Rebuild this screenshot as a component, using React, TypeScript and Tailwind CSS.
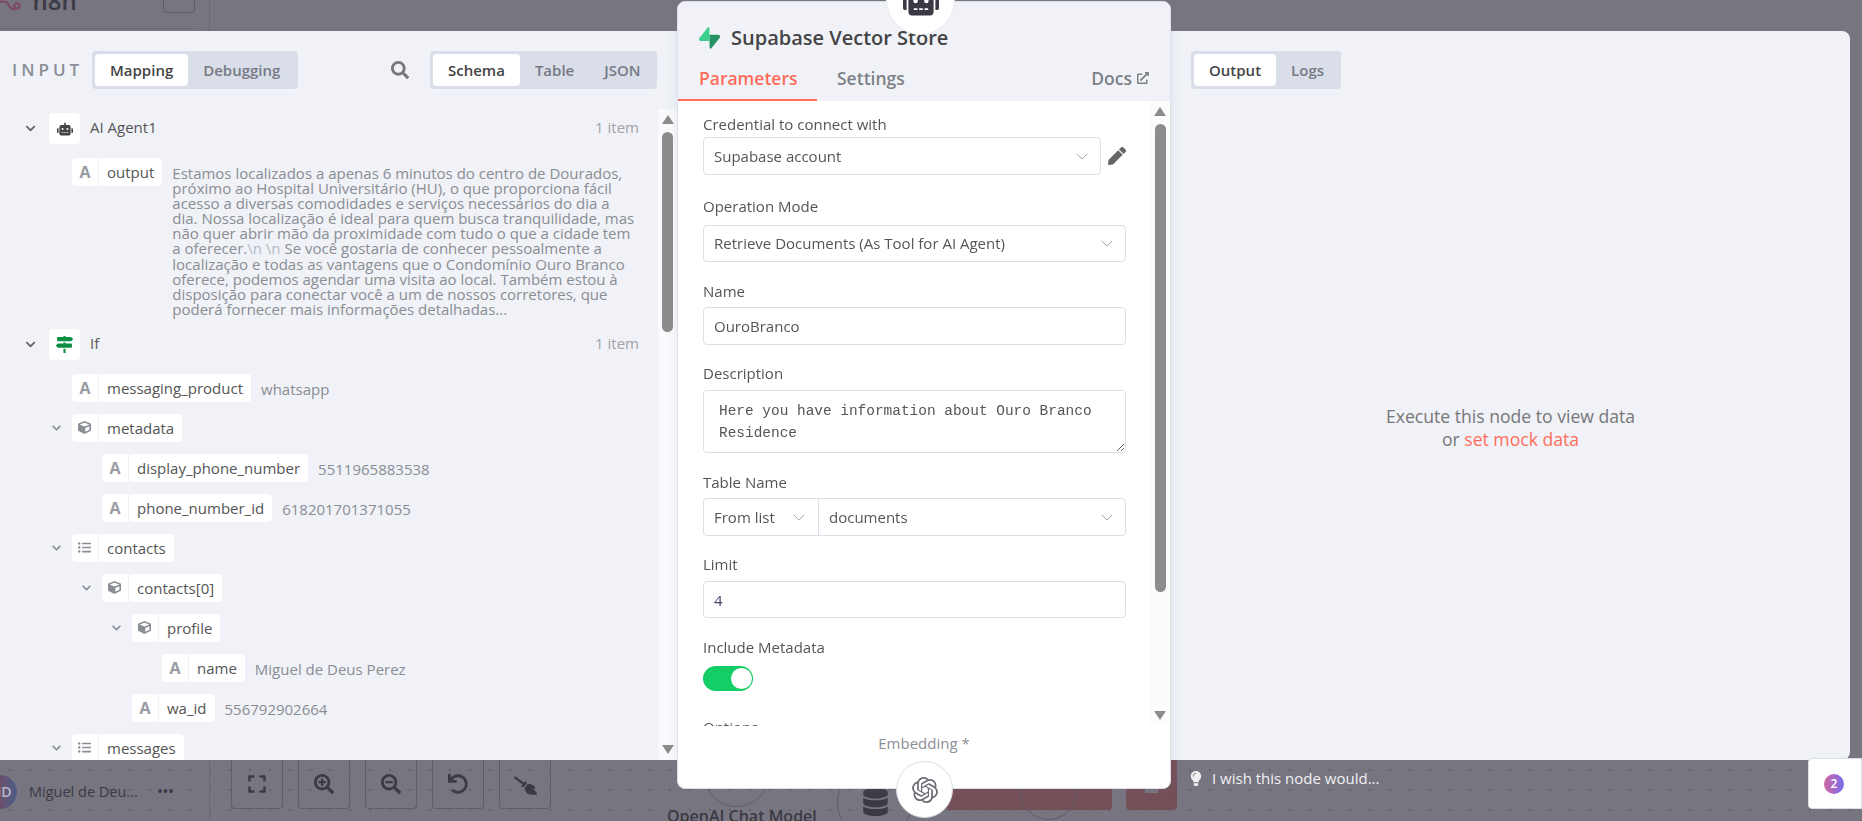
import type { ReactNode } from "react";
import {
  FaBroom,
  FaChevronDown,
  FaCube,
  FaDatabase,
  FaExpand,
  FaExternalLinkAlt,
  FaLightbulb,
  FaListUl,
  FaMapSigns,
  FaPen,
  FaRobot,
  FaSearch,
  FaSearchMinus,
  FaSearchPlus,
  FaUndo,
} from "react-icons/fa";
import { SiOpenai } from "react-icons/si";

type Kind = "text" | "object" | "list";

const rows: { depth: number; kind: Kind; name: string; value?: string }[] = [
  { depth: 0, kind: "text", name: "messaging_product", value: "whatsapp" },
  { depth: 0, kind: "object", name: "metadata" },
  { depth: 1, kind: "text", name: "display_phone_number", value: "5511965883538" },
  { depth: 1, kind: "text", name: "phone_number_id", value: "618201701371055" },
  { depth: 0, kind: "list", name: "contacts" },
  { depth: 1, kind: "object", name: "contacts[0]" },
  { depth: 2, kind: "object", name: "profile" },
  { depth: 3, kind: "text", name: "name", value: "Miguel de Deus Perez" },
  { depth: 2, kind: "text", name: "wa_id", value: "556792902664" },
  { depth: 0, kind: "list", name: "messages" },
];

function Pill({ kind, name }: { kind: Kind; name: string }) {
  return (
    <div className="flex h-[28px] shrink-0 items-center rounded bg-white text-[15px] text-[#555]">
      <span className="flex h-full w-[27px] items-center justify-center border-r border-[#eef0f5] text-[16px] font-bold text-[#989ba3]">
        {kind === "text" && "A"}
      </span>
      {kind === "object" && <FaCube className="-ml-[21px] mr-[8px] h-[13px] w-[13px] text-[#8b8e96]" />}
      {kind === "list" && <FaListUl className="-ml-[21px] mr-[8px] h-[13px] w-[13px] text-[#8b8e96]" />}
      <span className="pl-[8px] pr-[8px]">{name}</span>
    </div>
  );
}

function TreeRow({ depth, kind, name, value }: { depth: number; kind: Kind; name: string; value?: string }) {
  return (
    <div className="flex h-[40px] items-center" style={{ paddingLeft: 72 + depth * 30 }}>
      {kind !== "text" && (
        <span className="-ml-[21px] flex w-[21px] items-center">
          <FaChevronDown className="h-[10px] w-[11px] text-[#8b8e96]" />
        </span>
      )}
      <Pill kind={kind} name={name} />
      {value && <span className="ml-[10px] mt-[3px] text-[15px] text-[#8a8d93]">{value}</span>}
    </div>
  );
}

function NodeHeader({ icon, name }: { icon: ReactNode; name: string }) {
  return (
    <div className="flex h-[31px] items-center pl-[24px] pr-[19px]">
      <FaChevronDown className="h-[11px] w-[13px] text-[#666]" />
      <span className="ml-[12px] flex h-[31px] w-[31px] items-center justify-center rounded bg-white">{icon}</span>
      <span className="ml-[10px] -mt-[2px] text-[15px] text-[#555]">{name}</span>
      <span className="ml-auto -mt-[2px] text-[15px] text-[#a0a2a8]">1 item</span>
    </div>
  );
}

function Segmented({ items, active, className }: { items: string[]; active: string; className: string }) {
  return (
    <div className={`flex h-[38px] items-center rounded bg-[#d9dee8] px-[3px] text-[15px] font-semibold ${className}`}>
      {items.map((item) =>
        item === active ? (
          <span key={item} className="flex h-[32px] items-center rounded bg-white px-[15px] text-[#444]">
            {item}
          </span>
        ) : (
          <span key={item} className="px-[15px] text-[#767a85]">
            {item}
          </span>
        ),
      )}
    </div>
  );
}

function Scrollbar({ thumb, className }: { thumb: string; className: string }) {
  return (
    <div className={`flex shrink-0 flex-col items-center ${className}`}>
      <span className="h-0 w-0 border-x-[6px] border-b-[9px] border-x-transparent border-b-[#8c8c8c]" />
      <span className={`mt-[8px] w-[11px] rounded-full bg-[#8c8c8c] ${thumb}`} />
      <span className="mt-auto h-0 w-0 border-x-[6px] border-t-[9px] border-x-transparent border-t-[#8c8c8c]" />
    </div>
  );
}

function Chevron() {
  return (
    <svg viewBox="0 0 14 8" className="h-[7px] w-[14px] shrink-0" fill="none" stroke="#8f929c" strokeWidth="1">
      <path d="M1 1l6 6 6-6" />
    </svg>
  );
}

function Label({ children, className }: { children: ReactNode; className: string }) {
  return <div className={`h-[19px] text-[15px] leading-[19px] text-[#555] ${className}`}>{children}</div>;
}

function Select({ value, className }: { value: string; className: string }) {
  return (
    <div className={`flex items-center justify-between rounded border border-[#dbdfe7] bg-white pl-[10px] pr-[11px] text-[15px] text-[#555] ${className}`}>
      {value}
      <Chevron />
    </div>
  );
}

const fieldInput = "block w-[423px] rounded border border-[#dbdfe7] bg-white px-[10px] text-[15px] text-[#555] outline-none";

function ToolButton({ children }: { children: ReactNode }) {
  return (
    <div className="flex h-[49px] w-[52px] items-start justify-center rounded-b border-x border-b border-[#5f5e69] pt-[14px] text-[20px] text-[#3b3a44]">
      {children}
    </div>
  );
}

export default function App() {
  return (
    <div className="relative flex h-[821px] w-[1862px] flex-col overflow-hidden bg-[#777580] font-['Open_Sans',sans-serif]">
      {/* canvas behind the modal */}
      <div className="flex h-[31px] shrink-0">
        <div className="h-[31px] w-[210px] shrink-0 border-r border-[#696873]">
          <div className="flex h-[29px] w-[195px] items-start border-b border-[#6b6a75]">
            <svg viewBox="0 0 24 14" className="h-[14px] w-[24px]" fill="none" stroke="#7e4a68" strokeWidth="2.5">
              <path d="M0 1h6c3 0 3 4 6 7 2 2 5 2 7 0" />
              <circle cx="19" cy="6" r="3" />
            </svg>
            <span className="-mt-[17px] ml-[11px] text-[24px] font-semibold text-[#3b3a44]">n8n</span>
            <span className="ml-[86px] flex h-[13px] w-[36px] items-start justify-center rounded-b border-x border-b border-[#5f5e69] text-[#3b3a44]" />
          </div>
        </div>
      </div>

      <div className="flex h-[729px] w-[1850px] shrink-0 overflow-hidden rounded-r-lg bg-[#f0f2f8]">
        <section className="flex w-[677px] shrink-0 flex-col">
          <header className="flex h-[78px] shrink-0 items-start pl-[12px] pt-[20px]">
            <span className="mt-[7px] w-[80px] text-[17px] font-semibold leading-[24px] tracking-[4px] text-[#8b8e96]">INPUT</span>
            <Segmented items={["Mapping", "Debugging"]} active="Mapping" className="w-[206px]" />
            <FaSearch className="ml-[93px] mt-[10px] h-[18px] w-[18px] text-[#777]" />
            <Segmented items={["Schema", "Table", "JSON"]} active="Schema" className="ml-[21px] w-[227px]" />
          </header>
          <div className="flex min-h-0 flex-1">
            <div className="min-w-0 flex-1 overflow-hidden pt-[4px]">
              <NodeHeader icon={<FaRobot className="h-[16px] w-[16px] text-[#444]" />} name="AI Agent1" />
              <div className="mt-[14px] flex items-start pl-[72px]">
                <Pill kind="text" name="output" />
                <p className="ml-[10px] mt-[8px] whitespace-nowrap text-[15px] leading-[15.1px] text-[#8a8d93]">
                  Estamos localizados a apenas 6 minutos do centro de Dourados,
                  <br />
                  próximo ao Hospital Universitário (HU), o que proporciona fácil
                  <br />
                  acesso a diversas comodidades e serviços necessários do dia a
                  <br />
                  dia. Nossa localização é ideal para quem busca tranquilidade, mas
                  <br />
                  não quer abrir mão da proximidade com tudo o que a cidade tem
                  <br />
                  a oferecer.<span className="text-[#b4bcc6]">\n \n</span> Se você gostaria de conhecer pessoalmente a
                  <br />
                  localização e todas as vantagens que o Condomínio Ouro Branco
                  <br />
                  oferece, podemos agendar uma visita ao local. Também estou à
                  <br />
                  disposição para conectar você a um de nossos corretores, que
                  <br />
                  poderá fornecer mais informações detalhadas...
                </p>
              </div>
              <div className="mt-[12px]">
                <NodeHeader icon={<FaMapSigns className="h-[17px] w-[17px] text-[#0c8f43]" />} name="If" />
              </div>
              <div className="mt-[8px]">
                {rows.map((row) => (
                  <TreeRow key={row.name} {...row} />
                ))}
              </div>
            </div>
            <Scrollbar thumb="h-[200px]" className="w-[19px] bg-[#f9fafc] pb-[6px] pt-[6px]" />
          </div>
        </section>

        <div className="w-[494px] shrink-0" />

        <section className="flex min-w-0 flex-1 flex-col">
          <header className="pl-[20px] pt-[20px]">
            <Segmented items={["Output", "Logs"]} active="Output" className="w-[150px]" />
          </header>
          <div className="flex flex-1 flex-col items-center justify-center pt-[6px] text-[17.6px] leading-[23px] text-[#777]">
            <span>Execute this node to view data</span>
            <span>
              or <span className="text-[#ff6d5a]">set mock data</span>
            </span>
          </div>
        </section>
      </div>

      <div className="relative flex h-[61px] shrink-0 items-start overflow-hidden bg-[#777580] bg-[radial-gradient(#62616c_1px,transparent_1px)] bg-[size:20px_20px]">
        <div className="flex h-[61px] w-[210px] shrink-0 items-center border-r border-[#696873] pt-[2px]">
          <span className="-ml-[17px] flex h-[34px] w-[34px] shrink-0 items-center justify-center rounded-full bg-[linear-gradient(90deg,#8e4050,#4b5f88)] text-[14px] font-semibold text-[#b8b6c4]">
            MD
          </span>
          <span className="ml-[12px] whitespace-nowrap text-[14.5px] font-medium text-[#3b3a44]">Miguel de Deu...</span>
          <span className="ml-[20px] text-[12px] font-bold tracking-[1px] text-[#3b3a44]">•••</span>
        </div>
        <div className="ml-[21px] flex gap-[15px]">
          <ToolButton><FaExpand /></ToolButton>
          <ToolButton><FaSearchPlus /></ToolButton>
          <ToolButton><FaSearchMinus /></ToolButton>
          <ToolButton><FaUndo /></ToolButton>
          <ToolButton><FaBroom className="h-[23px] w-[23px] -scale-x-100" /></ToolButton>
        </div>
        <div className="ml-[639px] mt-[7px] flex items-center gap-[10px] whitespace-nowrap text-[15px] text-[#f0f0f2]">
          <FaLightbulb className="h-[15px] w-[12px]" />
          I wish this node would...
        </div>

        {/* nodes of the workflow, mostly hidden by the modal */}
        <span className="absolute left-[703px] top-[-20px] h-[67px] w-[67px] rounded-full border border-[#5f5e69]" />
        <span className="absolute left-[667px] top-[44px] whitespace-nowrap text-[16px] font-semibold text-[#3b3a44]">OpenAI Chat Model</span>
        <span className="absolute left-[837px] top-[5px] h-[75px] w-[75px] rounded-full border border-[#5f5e69]" />
        <FaDatabase className="absolute left-[862px] top-[28px] h-[28px] w-[27px] text-[#3b3a44]" />
        <span className="absolute left-[945px] top-[-10px] h-[60px] w-[167px] rounded bg-[#754f58]" />
        <span className="absolute left-[1126px] top-[-10px] h-[60px] w-[51px] rounded bg-[#754f58]" />
        <span className="absolute left-[1145px] top-0 h-[33px] w-[13px] bg-[#777580]" />
        <span className="absolute left-[1020px] top-[-10px] h-[70px] w-[57px] rounded-full border border-[#5f5e69]" />
      </div>

      {/* node detail card */}
      <div className="absolute left-[677px] top-[1px] flex h-[788px] w-[494px] flex-col overflow-hidden rounded-lg border border-[#dbdfe7] bg-white shadow-[0_0_12px_rgba(120,125,150,0.15)]">
        <header className="h-[99px] shrink-0 bg-[#f0f2f8]">
          <div className="flex h-[56px] items-center pl-[21px] pt-[16px]">
            <svg viewBox="0 0 109 113" className="h-[22px] w-[21px]">
              <path d="M63.7076 110.284C60.8481 113.885 55.0502 111.912 54.9813 107.314L53.9738 40.0627L99.1935 40.0627C107.384 40.0627 111.952 49.5228 106.859 55.9374L63.7076 110.284Z" fill="#249361" />
              <path d="M45.317 2.07103C48.1765 -1.53037 53.9745 0.442937 54.0434 5.041L54.4849 72.2922H9.83113C1.64038 72.2922 -2.92775 62.8321 2.1655 56.4175L45.317 2.07103Z" fill="#3ECF8E" />
            </svg>
            <h1 className="ml-[11px] text-[20px] font-semibold text-[#444]">Supabase Vector Store</h1>
          </div>
          <div className="flex h-[43px] items-start text-[17.5px] font-semibold text-[#7e8186]">
            <span className="flex h-[43px] w-[139px] items-start border-b-2 border-[#ff6d5a] pl-[21px] pt-[7px] text-[#ff6d5a]">Parameters</span>
            <span className="ml-[20px] pt-[7px]">Settings</span>
            <span className="ml-auto flex items-center gap-[5px] pr-[21px] pt-[7px]">
              Docs
              <FaExternalLinkAlt className="h-[12px] w-[12px]" />
            </span>
          </div>
        </header>

        <div className="flex h-[625px] shrink-0 overflow-hidden">
          <form className="min-w-0 flex-1 pl-[25px] pt-[14px]">
            <Label className="mb-[3px]">Credential to connect with</Label>
            <div className="flex items-center">
              <Select value="Supabase account" className="h-[38px] w-[398px]" />
              <FaPen className="ml-[7px] h-[18px] w-[18px] text-[#666]" />
            </div>
            <Label className="mb-[9px] mt-[22px]">Operation Mode</Label>
            <Select value="Retrieve Documents (As Tool for AI Agent)" className="h-[37px] w-[423px]" />
            <Label className="mb-[6px] mt-[20px]">Name</Label>
            <input readOnly value="OuroBranco" className={`${fieldInput} h-[38px]`} />
            <Label className="mb-[7px] mt-[19px]">Description</Label>
            <textarea
              readOnly
              value="Here you have information about Ouro Branco Residence"
              className={`${fieldInput} h-[63px] resize-y !px-[15px] py-[9px] font-['Liberation_Mono',monospace] !text-[14.45px] leading-[22px]`}
            />
            <Label className="mb-[6px] mt-[20px]">Table Name</Label>
            <div className="flex h-[38px] w-[423px] rounded border border-[#dbdfe7] text-[15px] text-[#555]">
              <div className="flex w-[115px] items-center justify-between border-r border-[#dbdfe7] pl-[10px] pr-[12px]">
                From list
                <Chevron />
              </div>
              <div className="flex flex-1 items-center justify-between pl-[10px] pr-[11px]">
                documents
                <Chevron />
              </div>
            </div>
            <Label className="mb-[7px] mt-[19px]">Limit</Label>
            <input readOnly value="4" className={`${fieldInput} h-[37px] !text-[#4a3f6b]`} />
            <Label className="mb-[9px] mt-[20px]">Include Metadata</Label>
            <div className="flex h-[25px] w-[50px] items-center justify-end rounded-full bg-[#13ce66] pr-[1px]">
              <span className="h-[21px] w-[21px] rounded-full bg-white" />
            </div>
            <Label className="mt-[27px]">Options</Label>
          </form>
          <Scrollbar thumb="h-[468px]" className="w-[20px] bg-[#fcfcfd] pb-[6px] pt-[6px]" />
        </div>

        <div className="pt-[6px] text-center text-[15px] text-[#8b8e96]">Embedding *</div>
      </div>

      {/* round connectors on the card edges */}
      <span className="absolute left-[887px] top-[-33px] flex h-[67px] w-[67px] items-end justify-center rounded-full bg-white pb-[17px] shadow-[0_0_0_1px_#e6e8ef]">
        <FaRobot className="h-[32px] w-[36px] text-[#3b3a44]" />
      </span>
      <span className="absolute left-[896px] top-[761px] flex h-[57px] w-[57px] items-center justify-center rounded-full border border-[#dbdfe7] bg-white">
        <SiOpenai className="h-[26px] w-[26px] text-[#6b6e76]" />
      </span>

      {/* feedback button */}
      <div className="absolute left-[1808px] top-[758px] flex h-[51px] w-[54px] items-center justify-start rounded-l border border-[#dbdfe7] bg-white pl-[15px]">
        <span className="flex h-[20px] w-[20px] items-center justify-center rounded-full bg-[linear-gradient(90deg,#d0689f,#7a6cf0)] text-[12px] font-semibold text-white">2</span>
      </div>
    </div>
  );
}
